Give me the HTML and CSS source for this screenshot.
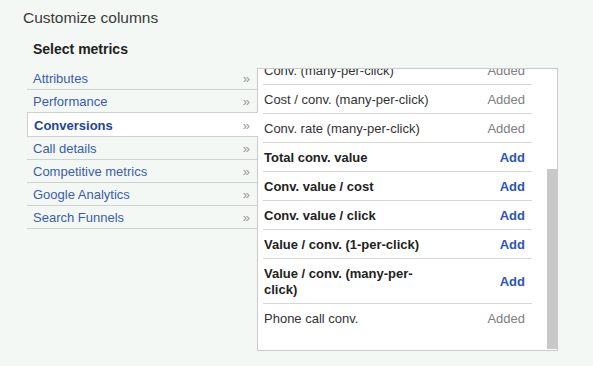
FILE: index.html
```html
<!DOCTYPE html>
<html>
<head>
<meta charset="utf-8">
<link rel="stylesheet" href="styles.css">
</head>
<body>
<div class="page">
  <h1 class="title">Customize columns</h1>
  <h2 class="subtitle">Select metrics</h2>
  <div class="picker">
    <ul class="nav">
      <li class="nav-item"><span>Attributes</span><span class="arr">»</span></li>
      <li class="nav-item"><span>Performance</span><span class="arr">»</span></li>
      <li class="nav-item active"><span>Conversions</span><span class="arr">»</span></li>
      <li class="nav-item"><span>Call details</span><span class="arr">»</span></li>
      <li class="nav-item"><span>Competitive metrics</span><span class="arr">»</span></li>
      <li class="nav-item"><span>Google Analytics</span><span class="arr">»</span></li>
      <li class="nav-item"><span>Search Funnels</span><span class="arr">»</span></li>
    </ul>
    <div class="panel">
      <div class="viewport">
        <div class="list">
          <div class="row"><span class="label">Conv. (many-per-click)</span><span class="added">Added</span></div>
          <div class="row"><span class="label">Cost / conv. (many-per-click)</span><span class="added">Added</span></div>
          <div class="row"><span class="label">Conv. rate (many-per-click)</span><span class="added">Added</span></div>
          <div class="row strong"><span class="label">Total conv. value</span><span class="add">Add</span></div>
          <div class="row strong"><span class="label">Conv. value / cost</span><span class="add">Add</span></div>
          <div class="row strong"><span class="label">Conv. value / click</span><span class="add">Add</span></div>
          <div class="row strong"><span class="label">Value / conv. (1-per-click)</span><span class="add">Add</span></div>
          <div class="row strong"><span class="label">Value / conv. (many-per-click)</span><span class="add">Add</span></div>
          <div class="row"><span class="label">Phone call conv.</span><span class="added">Added</span></div>
        </div>
      </div>
      <div class="scrollbar"><div class="thumb"></div></div>
    </div>
  </div>
</div>
</body>
</html>
```

FILE: styles.css
```css
html, body {
  margin: 0;
  padding: 0;
  background: #f4f8f4;
  height: 100%;
}
body {
  font-family: Arial, "Liberation Sans", sans-serif;
  color: #333;
}
.page {
  padding: 9px 0 0 23px;
}
.title {
  margin: 0;
  font-size: 15.5px;
  line-height: 18px;
  font-weight: normal;
  color: #3a3a3a;
}
.subtitle {
  margin: 14px 0 0 10px;
  font-size: 14px;
  line-height: 16px;
  font-weight: bold;
  color: #222;
}
.picker {
  display: flex;
  align-items: flex-start;
  margin: 10px 0 0 4px;
}
.nav {
  list-style: none;
  margin: 0;
  padding: 0;
  width: 230px;
  flex: 0 0 230px;
}
.nav-item {
  display: flex;
  justify-content: space-between;
  align-items: center;
  height: 21px;
  padding: 1px 7px 0 6px;
  border-bottom: 1px solid #cfd3cf;
  font-size: 13px;
  line-height: 21px;
  color: #3a5cb0;
}
.nav-item.active {
  position: relative;
  z-index: 2;
  height: 22px;
  margin-top: -1px;
  margin-right: -1px;
  background: #fff;
  border: 1px solid #cfcfcf;
  border-right: none;
  font-weight: bold;
  color: #22449c;
  padding-right: 8px;
}
.arr {
  font-size: 13px;
  color: #9a9a9a;
  font-weight: normal;
}
.panel {
  display: flex;
  box-sizing: border-box;
  width: 301px;
  height: 283px;
  margin-top: 1px;
  background: #fff;
  border: 1px solid #cacaca;
}
.viewport {
  flex: 1;
  overflow: hidden;
}
.list {
  margin-top: -13px;
  padding: 0 15px 0 5px;
}
.row {
  display: flex;
  justify-content: space-between;
  align-items: center;
  padding: 7px 7px 5px 1px;
  font-size: 13px;
  line-height: 16px;
  border-bottom: 1px solid #d6d6d6;
  color: #333;
}
.row:last-child {
  border-bottom: none;
}
.row .label {
  max-width: 175px;
}
.row.strong .label {
  font-weight: bold;
  color: #222;
}
.added {
  color: #808080;
}
.add {
  color: #2d55b8;
  font-weight: bold;
}
.scrollbar {
  width: 10px;
  flex: 0 0 10px;
  padding-top: 100px;
  box-sizing: border-box;
  height: 100%;
}
.thumb {
  height: 180px;
  background: #c8c8c8;
}
```
